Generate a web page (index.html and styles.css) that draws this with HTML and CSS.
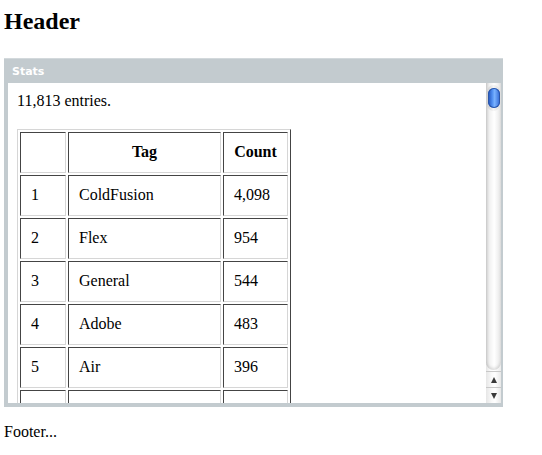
FILE: index.html
```html
<!DOCTYPE html>
<html>
<head>
<meta charset="utf-8">
<link rel="stylesheet" href="styles.css">
</head>
<body>
<div class="page">
  <h1 class="title">Header</h1>
  <div class="panel">
    <div class="panel-head">Stats</div>
    <div class="panel-body">
      <div class="panel-content">
        <p class="count">11,813 entries.</p>
        <table class="stats">
          <tr><th class="c-num"></th><th class="c-tag">Tag</th><th class="c-count">Count</th></tr>
          <tr><td>1</td><td>ColdFusion</td><td>4,098</td></tr>
          <tr><td>2</td><td>Flex</td><td>954</td></tr>
          <tr><td>3</td><td>General</td><td>544</td></tr>
          <tr><td>4</td><td>Adobe</td><td>483</td></tr>
          <tr><td>5</td><td>Air</td><td>396</td></tr>
          <tr><td>&nbsp;</td><td>&nbsp;</td><td>&nbsp;</td></tr>
        </table>
      </div>
      <div class="scrollbar">
        <div class="track">
          <div class="thumb"><div class="thumb-gem"></div></div>
        </div>
        <div class="arrow arrow-up"><span class="tri-up"></span></div>
        <div class="arrow arrow-down"><span class="tri-down"></span></div>
      </div>
    </div>
  </div>
  <p class="footer">Footer...</p>
</div>
</body>
</html>
```

FILE: styles.css
```css
html, body {
  margin: 0;
  padding: 0;
  background: #fff;
}

body {
  font-family: "Liberation Serif", "Times New Roman", serif;
  font-size: 16px;
  color: #000;
}

.page {
  padding: 0 0 0 4px;
}

.title {
  margin: 8px 0 23px;
  font-size: 24px;
  line-height: 27px;
  font-weight: bold;
}

.panel {
  width: 493px;
  background: #c3cbcf;
  border-top: 1px solid #d3d9dc;
  padding: 0 2px 4px 4px;
}

.panel-head {
  height: 24px;
  line-height: 26px;
  padding-left: 4px;
  font-family: "DejaVu Sans", Verdana, sans-serif;
  font-size: 11px;
  font-weight: bold;
  color: #fff;
}

.panel-body {
  display: flex;
  height: 320px;
  background: #fff;
}

.panel-content {
  flex: 1;
  overflow: hidden;
  padding: 9px 0 0 9px;
}

.count {
  margin: 0 0 19px;
  line-height: 18px;
}

.stats {
  border-collapse: separate;
  border-spacing: 2px;
  border: 1px solid;
  border-color: #d6d6d6 #444 #444 #d6d6d6;
}

.stats th,
.stats td {
  border: 1px solid;
  border-color: #444 #d6d6d6 #d6d6d6 #444;
  padding: 9px 10px 11px;
  line-height: 19px;
  height: 19px;
  text-align: left;
  vertical-align: middle;
}

.stats th {
  text-align: center;
  font-weight: bold;
}

.c-num { width: 24px; }
.c-tag { width: 131px; }
.c-count { width: 43px; }

.scrollbar {
  width: 15px;
  display: flex;
  flex-direction: column;
  background: linear-gradient(to right, #e4e4e4, #fbfbfb 30%, #fff 55%, #ececec);
}

.track {
  flex: 1;
  padding-top: 2px;
  border-radius: 0 0 8px 8px;
  background: linear-gradient(to right, #d4d4d4, #f2f2f2 25%, #fff 55%, #e6e6e6);
  box-shadow: inset 0 -2px 3px rgba(0,0,0,0.12);
  margin-bottom: 1px;
}

.thumb {
  margin: 0 1px;
  height: 26px;
  border-radius: 7px;
  background: linear-gradient(to right, #cfcfcf, #f4f4f4 50%, #dcdcdc);
  display: flex;
  align-items: center;
  justify-content: center;
}

.thumb-gem {
  width: 12px;
  height: 20px;
  border-radius: 6px;
  background: linear-gradient(to right, #1f4fb6, #4f8ef0 35%, #79b2ff 55%, #2f66d2);
  box-shadow: inset 0 0 0 1px #2a55a8;
}

.arrow {
  height: 15px;
  border-top: 1px solid #c8c8c8;
  display: flex;
  align-items: center;
  justify-content: center;
  background: linear-gradient(to right, #e6e6e6, #fafafa 40%, #fff 60%, #e8e8e8);
}

.tri-up {
  width: 0;
  height: 0;
  border-left: 3.5px solid transparent;
  border-right: 3.5px solid transparent;
  border-bottom: 6px solid #3a3a3a;
}

.tri-down {
  width: 0;
  height: 0;
  border-left: 3.5px solid transparent;
  border-right: 3.5px solid transparent;
  border-top: 6px solid #3a3a3a;
}

.footer {
  margin: 16px 0 0;
  line-height: 18px;
}
```
